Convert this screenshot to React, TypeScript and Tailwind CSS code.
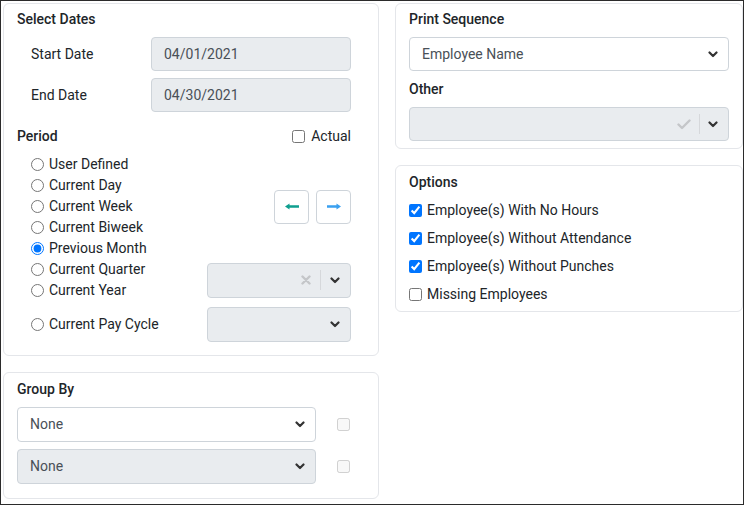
import { ReactNode } from 'react';

const font = { fontFamily: 'Roboto, "Noto Sans", Arial, sans-serif' };

function Chevron() {
  return (
    <svg width="10" height="7" viewBox="0 0 10 7" className="shrink-0">
      <path d="M1.5 1.5 L5 5 L8.5 1.5" fill="none" stroke="#333" strokeWidth="2.2" strokeLinecap="round" strokeLinejoin="round" />
    </svg>
  );
}

function Card({ children, className = '' }: { children: ReactNode; className?: string }) {
  return <div className={`rounded-[6px] border border-[#e4e6ea] bg-white ${className}`}>{children}</div>;
}

function Heading({ children }: { children: ReactNode }) {
  return <div className="h-5 text-[14px] leading-5 font-medium text-[#212529]">{children}</div>;
}

function Select({ value, disabled = false, className = '' }: { value?: string; disabled?: boolean; className?: string }) {
  return (
    <div
      className={`flex h-[34px] items-center justify-between rounded-[4px] border border-[#ced4da] pl-3 pr-[10px] text-[14px] text-[#495057] ${
        disabled ? 'bg-[#e9ecef]' : 'bg-white'
      } ${className}`}
    >
      <span>{value}</span>
      <Chevron />
    </div>
  );
}

function Radio({ label, checked = false }: { label: string; checked?: boolean }) {
  return (
    <label className="flex h-[21px] items-center text-[14px] text-[#212529]">
      <input type="radio" name="period" defaultChecked={checked} className="m-0 ml-[14px] mr-[5px] h-[13px] w-[13px]" />
      {label}
    </label>
  );
}

function Arrow({ dir, color }: { dir: 'left' | 'right'; color: string }) {
  return (
    <svg width="14" height="7" viewBox="0 0 14 7">
      {dir === 'left' ? (
        <path d="M0 3.5 L4.5 0.5 L4.5 2.3 L14 2.3 L14 4.7 L4.5 4.7 L4.5 6.5 Z" fill={color} />
      ) : (
        <path d="M14 3.5 L9.5 0.5 L9.5 2.3 L0 2.3 L0 4.7 L9.5 4.7 L9.5 6.5 Z" fill={color} />
      )}
    </svg>
  );
}

export default function App() {
  return (
    <div style={font} className="h-[505px] w-[744px] overflow-hidden border border-[#2b2b2b] bg-white pl-[2px] pt-[2px]">
      <div className="grid grid-cols-[376px_1fr] gap-x-4">
        {/* left column */}
        <div className="flex flex-col gap-4">
          <Card className="pl-[13px] pr-[27px] pt-[5px] pb-[13px]">
            <Heading>Select Dates</Heading>
            <div className="mt-2 flex items-center">
              <span className="w-[134px] pl-[14px] text-[14px] text-[#212529]">Start Date</span>
              <div className="flex h-[34px] flex-1 items-center rounded-[4px] border border-[#ced4da] bg-[#e9ecef] px-3 text-[14px] text-[#495057]">
                04/01/2021
              </div>
            </div>
            <div className="mt-[7px] flex items-center">
              <span className="w-[134px] pl-[14px] text-[14px] text-[#212529]">End Date</span>
              <div className="flex h-[34px] flex-1 items-center rounded-[4px] border border-[#ced4da] bg-[#e9ecef] px-3 text-[14px] text-[#495057]">
                04/30/2021
              </div>
            </div>
            <div className="mt-[14px] flex h-5 items-center justify-between">
              <span className="text-[14px] font-medium text-[#212529]">Period</span>
              <label className="flex items-center text-[14px] text-[#212529]">
                <input type="checkbox" className="m-0 mr-[6px] h-[13px] w-[13px]" />
                Actual
              </label>
            </div>
            <div className="mt-[8px] grid grid-cols-[1fr_auto] grid-rows-[repeat(7,21px)]">
              <div className="col-start-1 row-span-7 row-start-1 flex flex-col">
                <Radio label="User Defined" />
                <Radio label="Current Day" />
                <Radio label="Current Week" />
                <Radio label="Current Biweek" />
                <Radio label="Previous Month" checked />
                <Radio label="Current Quarter" />
                <Radio label="Current Year" />
              </div>
              <div className="col-start-2 row-span-3 row-start-2 flex items-center justify-end gap-[7px]">
                <button className="flex h-[34px] w-[35px] items-center justify-center rounded-[4px] border border-[#ced4da] bg-white">
                  <Arrow dir="left" color="#0f9f8f" />
                </button>
                <button className="flex h-[34px] w-[35px] items-center justify-center rounded-[4px] border border-[#ced4da] bg-white">
                  <Arrow dir="right" color="#3aa0f0" />
                </button>
              </div>
              <div className="col-start-2 row-span-2 row-start-6 flex items-center">
                <div className="flex h-[35px] w-[144px] items-center justify-end rounded-[4px] border border-[#ced4da] bg-[#e9ecef] pr-[10px]">
                  <svg width="10" height="10" viewBox="0 0 10 10">
                    <path d="M1.5 1.5 L8.5 8.5 M8.5 1.5 L1.5 8.5" stroke="#c4c6c9" strokeWidth="2.4" strokeLinecap="round" />
                  </svg>
                  <span className="mx-[9px] h-5 w-px bg-[#d6d8db]" />
                  <Chevron />
                </div>
              </div>
            </div>
            <div className="mt-[6px] flex items-center justify-between">
              <Radio label="Current Pay Cycle" />
              <Select disabled className="h-[35px] w-[144px]" />
            </div>
          </Card>

          <Card className="pl-[13px] pr-[28px] pt-[6px] pb-[14px]">
            <Heading>Group By</Heading>
            <div className="mt-2 flex items-center justify-between">
              <Select value="None" className="h-[35px] w-[299px]" />
              <input type="checkbox" disabled className="m-0 h-[13px] w-[13px]" />
            </div>
            <div className="mt-[7px] flex items-center justify-between">
              <Select value="None" disabled className="h-[35px] w-[299px]" />
              <input type="checkbox" disabled className="m-0 h-[13px] w-[13px]" />
            </div>
          </Card>
        </div>

        {/* right column */}
        <div className="flex flex-col gap-4">
          <Card className="px-[13px] pt-[5px] pb-[7px]">
            <Heading>Print Sequence</Heading>
            <Select value="Employee Name" className="mt-2" />
            <div className="mt-2 h-5 text-[14px] leading-5 font-medium text-[#212529]">Other</div>
            <div className="mt-2 flex h-[34px] items-center justify-end rounded-[4px] border border-[#ced4da] bg-[#e9ecef] pr-[10px]">
              <svg width="14" height="11" viewBox="0 0 14 11">
                <path d="M1.5 5.5 L5 9 L12.5 1.5" fill="none" stroke="#c4c6c9" strokeWidth="2.4" strokeLinecap="round" strokeLinejoin="round" />
              </svg>
              <span className="mx-[8px] h-5 w-px bg-[#d6d8db]" />
              <Chevron />
            </div>
          </Card>

          <Card className="px-[13px] pt-[6px] pb-[7px]">
            <Heading>Options</Heading>
            <div className="mt-2 flex flex-col gap-2">
              {[
                ['Employee(s) With No Hours', true],
                ['Employee(s) Without Attendance', true],
                ['Employee(s) Without Punches', true],
                ['Missing Employees', false],
              ].map(([label, checked]) => (
                <label key={label as string} className="flex h-5 items-center text-[14px] text-[#212529]">
                  <input type="checkbox" defaultChecked={checked as boolean} className="m-0 mr-[5px] h-[13px] w-[13px]" />
                  {label as string}
                </label>
              ))}
            </div>
          </Card>
        </div>
      </div>
    </div>
  );
}
